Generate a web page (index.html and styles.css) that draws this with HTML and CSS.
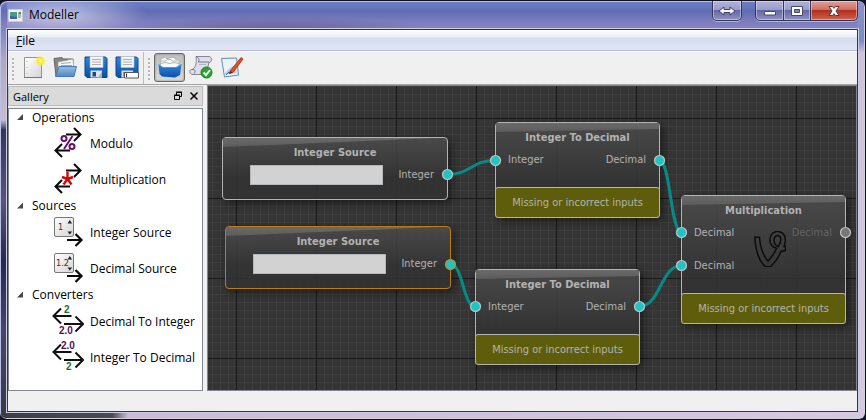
FILE: index.html
```html
<!DOCTYPE html>
<html lang="en">
<head>
<meta charset="utf-8">
<title>Modeller</title>
<link rel="stylesheet" href="styles.css">
</head>
<body>
<svg width="0" height="0" class="defs" aria-hidden="true">
  <defs>
    <linearGradient id="blue" x1="0" y1="0" x2="0" y2="1"><stop offset="0" stop-color="#2f86dc"/><stop offset="1" stop-color="#0a4fa8"/></linearGradient>
    <linearGradient id="folder" x1="0" y1="0" x2="0" y2="1"><stop offset="0" stop-color="#9dbde0"/><stop offset="1" stop-color="#5287c0"/></linearGradient>
    <linearGradient id="paper" x1="0" y1="0" x2="1" y2="1"><stop offset="0" stop-color="#ffffff"/><stop offset="1" stop-color="#d4d4d4"/></linearGradient>
    <radialGradient id="sun"><stop offset="0" stop-color="#fffde0"/><stop offset="0.35" stop-color="#fff21a"/><stop offset="0.65" stop-color="#f8ec30" stop-opacity="0.8"/><stop offset="1" stop-color="#f8f060" stop-opacity="0"/></radialGradient>
    <symbol id="disk" viewBox="0 0 24 24">
      <path d="M1 2h20.500l1.500 1.500V22.500H3L1 20.500z" fill="url(#blue)" stroke="#0b4690"/>
      <path d="M6 1.500h13v11H6z" fill="#f4f4f4" stroke="#b9c4cf" stroke-width=".6"/>
      <path d="M8 4.500h9M8 7h9M8 9.500h9" stroke="#b0b0b0"/>
      <path d="M6.500 15.500h11.500v7H6.500z" fill="#dfe3e6"/>
      <path d="M8.500 17h3.500v4.500H8.500z" fill="#164c8c"/>
      <path d="M14 22.500l4-6v6z" fill="#aab0b6"/>
    </symbol>
    <symbol id="swap" viewBox="0 0 32 32">
      <path d="M14 7.500h14M22 1l6.500 6.500L22 14M18 23.500H4M10 17l-6.500 6.500L10 30" fill="none" stroke="#0a0a0a" stroke-width="2"/>
    </symbol>
    <symbol id="swap-flat" viewBox="0 0 32 32">
      <path d="M19.500 11H1.500M9 3.500L1.500 11 9 18.500M12 19h18.500M23.500 11.500L31 19l-7.500 7.500" fill="none" stroke="#111" stroke-width="2"/>
    </symbol>
    <symbol id="spin" viewBox="0 0 32 32">
      <path d="M15 24h14M23.500 18l6 6-6 6" fill="none" stroke="#0a0a0a" stroke-width="2.200"/>
      <rect x="2.500" y="1.500" width="19" height="19" rx="1.500" fill="url(#paper)" stroke="#777"/>
      <path d="M15.500 7.500l2.300-3.500 2.300 3.500zM15.500 15.500l2.300 3 2.300-3z" fill="#222"/>
    </symbol>
  </defs>
</svg>
<div class="window">
  <header class="titlebar">
    <svg class="app-icon" viewBox="0 0 16 14"><path d="M.5.500h14v12H.5z" fill="#f0f0f0" stroke="#c8c8d0"/><path d="M2 3h7v7H2z" fill="#4a9a84"/><path d="M2 7l7 1v2H2z" fill="#4660a0"/><path d="M10 3h3v6h-3z" fill="#aab8ba"/><path d="M11 3h2v2h-2z" fill="#3c8c68"/></svg>
    <h1 class="title">Modeller</h1>
    <div class="captions">
      <button class="cap cap-span" aria-label="Span displays"><svg viewBox="0 0 18 10"><path d="M1 5l5-4v2.500h6V1l5 4-5 4V6.500H6V9z" fill="#f6f6f6" stroke="#40456b" stroke-width="1"/></svg></button>
      <div class="cap-group">
        <button class="cap cap-min" aria-label="Minimize"><svg viewBox="0 0 18 10"><path d="M3.500 5.500h11v3.500h-11z" fill="#fff" stroke="#454a66"/></svg></button>
        <button class="cap cap-max" aria-label="Maximize"><svg viewBox="0 0 18 10"><path d="M3.500.500h11v9h-11z" fill="#fff" stroke="#454a66"/><path d="M6.500 3.500h5v3h-5z" fill="#8587ad" stroke="#454a66"/></svg></button>
        <button class="cap cap-close" aria-label="Close"><svg viewBox="0 0 18 10"><path d="M4 .5h3.500L9 2.300 10.500.500H14L11 5l3 4.500h-3.500L9 7.700 7.500 9.500H4L7 5z" fill="#fff" stroke="#5b3338"/></svg></button>
      </div>
    </div>
  </header>
  <div class="client">
    <nav class="menubar"><button class="menu"><u>F</u>ile</button></nav>
    <div class="toolbar">
      <div class="tools">
        <button class="tool" aria-label="New"><svg viewBox="0 0 24 24"><path d="M2.500 2.500h17v20h-17z" fill="url(#paper)" stroke="#949494"/><path d="M2 22.500h18" stroke="#777"/><path d="M5 6v1M5 12v1M5 18v1" stroke="#aaa"/><circle cx="18.500" cy="6" r="5.500" fill="url(#sun)"/></svg></button>
        <button class="tool" aria-label="Open"><svg viewBox="0 0 24 24"><path d="M1 3.500l8-1 1 1.500h10v17H3z" fill="#858585" stroke="#666"/><path d="M5 7l15-3 1 10H5z" fill="#f5f5f5" stroke="#999" stroke-width=".7"/><path d="M8 8.500l10-1M8 10.500h11" stroke="#aaa"/><path d="M6 11.500h17.500L21 21.500H2.500z" fill="url(#folder)" stroke="#457bb6"/></svg></button>
        <button class="tool" aria-label="Save"><svg viewBox="0 0 24 24"><use href="#disk"/></svg></button>
        <button class="tool" aria-label="Save as"><svg viewBox="0 0 24 24"><use href="#disk"/><path d="M9.500 17.500h14v5.500h-14z" fill="#fff" stroke="#555"/><path d="M11.500 18.500v3.500" stroke="#333"/></svg></button>
      </div>
      <div class="tools">
        <button class="tool tool-on" aria-label="Gallery"><svg viewBox="0 0 24 24"><path d="M3 3.500l4-1 1 1h3l1-1h4l1 1.500 4 1v8H2z" fill="#fafafa" stroke="#aaa" stroke-width=".8"/><path d="M3 6h5l1-1.500h4L14 6h6M3 8.500l4-1 5 1 4-1 5 1" fill="none" stroke="#b5b5b5"/><path d="M.5 9.500l4.500 3h13l5.500-3-1.500 10.500L17 22.500 4 21.500 1.500 19z" fill="url(#blue)"/><path d="M.5 9.500l4.500 3h13l5.500-3" fill="none" stroke="#3d97e6"/></svg></button>
        <button class="tool" aria-label="Validate"><svg viewBox="0 0 24 24"><path d="M7 1.500h13c4 1 3 6 0 6-1.500 7-4 10-7 12H3c-3-1-3-5 0-5 3-1 5-5 4-13z" fill="#dfdfea" stroke="#85859a"/><path d="M7 1.500c3 1 4 4 2 5.500h11M3 14.500c3-.5 4 2 2 4" fill="none" stroke="#74748c"/><path d="M10 9.500h7" stroke="#b2b2c4"/><circle cx="17.500" cy="17.500" r="5.500" fill="#27a52e" stroke="#13801c"/><path d="M14.500 17.500l2.500 2.500 4-5" fill="none" stroke="#fff" stroke-width="2"/></svg></button>
        <button class="tool" aria-label="Edit"><svg viewBox="0 0 24 24"><path d="M1.500 3.500l15-.5 2 17-14 2z" fill="#eaf3fc" stroke="#648bb3"/><path d="M4 19c3-2 5-7 10-8l3 7z" fill="#b2cfe9"/><path d="M6 20l3-3" stroke="#315885"/><path d="M10.500 15.500L21 2.500l2 1.500-10 13.500-3.500 1z" fill="#e64a22" stroke="#a92c18" stroke-width=".8"/><path d="M9 19l1-3 2.500 1.500z" fill="#334"/></svg></button>
      </div>
    </div>
    <main class="workspace">
      <aside class="dock">
        <div class="dock-title"><h2>Gallery</h2>
          <button class="dock-btn" aria-label="Float"><svg viewBox="0 0 10 10"><path d="M3.500 4V1.500h5v4H7M3 1h6M1.500 4.500h5v4h-5zM1 4h6" fill="none" stroke="#000"/></svg></button>
          <button class="dock-btn" aria-label="Close gallery"><svg viewBox="0 0 10 10"><path d="M1.500 1.500l7 7M8.500 1.500l-7 7" stroke="#000" stroke-width="1.500"/></svg></button>
        </div>
        <ul class="tree">
          <li><div class="group">Operations</div>
            <ul>
              <li class="item"><svg viewBox="0 0 32 32"><use href="#swap"/><g fill="none" stroke="#6a0f6a" stroke-width="2"><circle cx="12" cy="11.500" r="2.500"/><circle cx="20" cy="19.500" r="2.500"/><path d="M20.500 9L12 22"/></g></svg>Modulo</li>
              <li class="item"><svg viewBox="0 0 32 32"><use href="#swap"/><path d="M15.500 9v7L10 14M15.500 16l5.500-2M15.500 16l-4 5.500M15.500 16l4 5.500" fill="none" stroke="#c80a0a" stroke-width="2.400"/></svg>Multiplication</li>
            </ul></li>
          <li><div class="group">Sources</div>
            <ul>
              <li class="item"><svg viewBox="0 0 32 32"><use href="#spin"/><text x="6" y="14" class="glyph-spin">1</text></svg>Integer Source</li>
              <li class="item"><svg viewBox="0 0 32 32"><use href="#spin"/><text x="4" y="14" class="glyph-spin">1.2</text></svg>Decimal Source</li>
            </ul></li>
          <li><div class="group">Converters</div>
            <ul>
              <li class="item"><svg viewBox="0 0 32 32"><use href="#swap-flat"/><text x="12" y="8" class="glyph-num green">2</text><text x="7" y="29" class="glyph-num purple">2.0</text></svg>Decimal To Integer</li>
              <li class="item"><svg viewBox="0 0 32 32"><use href="#swap-flat"/><text x="9" y="8" class="glyph-num purple">2.0</text><text x="14" y="29" class="glyph-num green">2</text></svg>Integer To Decimal</li>
            </ul></li>
        </ul>
      </aside>
      <section class="canvas" aria-label="Model">
        <article class="node node-source at-source-a">
          <h3>Integer Source</h3>
          <div class="row"><input class="value" type="text" aria-label="Integer value"><span class="port out">Integer</span></div>
        </article>
        <article class="node node-source selected at-source-b">
          <h3>Integer Source</h3>
          <div class="row"><input class="value" type="text" aria-label="Integer value"><span class="port out">Integer</span></div>
        </article>
        <article class="node at-convert-a">
          <h3>Integer To Decimal</h3>
          <div class="row"><span class="port in">Integer</span><span class="port out">Decimal</span></div>
          <p class="warning">Missing or incorrect inputs</p>
        </article>
        <article class="node at-convert-b">
          <h3>Integer To Decimal</h3>
          <div class="row"><span class="port in">Integer</span><span class="port out">Decimal</span></div>
          <p class="warning">Missing or incorrect inputs</p>
        </article>
        <article class="node node-tall at-multiply">
          <h3>Multiplication</h3>
          <div class="row"><span class="port in">Decimal</span><span class="port out off">Decimal</span></div>
          <div class="row"><span class="port in">Decimal</span></div>
          <svg class="emblem" viewBox="0 0 32 36"><path d="M.8 6.300H5.500c.5 10 4 18.500 8.500 24 4-5 7.500-10 8.500-13-5-1.500-7-5-6.500-9.500.5-5 4-7.500 8-7.300 5 .3 8 4.500 7.200 10-.3 2-.7 3.500-1 5l1.300 0v4c-1.500.5-3 .8-4.500.8-2 5.500-5.500 10.500-9.500 14.500-2 1.500-5 1.500-7 0C5 29.500 1.500 18 .8 6.300zM24 4.500c-2.500 0-4 2-4 5s1.500 5 4.500 6c1.500-3 2.500-5.500 2.300-7.500-.2-2.300-1.300-3.500-2.800-3.500z" fill="none" stroke="#0c0c0c" stroke-width="1.500"/></svg>
          <p class="warning">Missing or incorrect inputs</p>
        </article>
        <svg class="wires" width="649" height="305" aria-hidden="true">
          <g fill="none" stroke="#068a86" stroke-width="3">
            <path d="M239 88.500C263 88.500 263 74.500 287 74.500"/>
            <path d="M243 178.500C255 178.500 255 220.500 267 220.500"/>
            <path d="M451.500 74.500C462.500 74.500 462.500 146.500 473.500 146.500"/>
            <path d="M431.500 220.500C452.500 220.500 452.500 179.500 473.500 179.500"/>
          </g>
          <g fill="#20c4c4" stroke="#c4c4c4" stroke-width="1.200">
            <circle cx="239.500" cy="88.500" r="5"/><circle cx="287.500" cy="74.500" r="5"/><circle cx="451.500" cy="74.500" r="5"/>
            <circle cx="267.500" cy="220.500" r="5"/><circle cx="431.500" cy="220.500" r="5"/>
            <circle cx="473.500" cy="146.500" r="5"/><circle cx="473.500" cy="179.500" r="5"/>
            <circle cx="242.500" cy="178.500" r="5" stroke="#c98a22"/><circle cx="637.500" cy="146.500" r="5" fill="#777"/>
          </g>
        </svg>
      </section>
    </main>
    <footer class="statusbar"></footer>
  </div>
</div>
</body>
</html>
```
FILE: styles.css
```css
* { box-sizing: border-box; }
body { margin: 0; background: #14142a; font: 12px/17px "Open Sans", "Noto Sans", sans-serif; color: #000; }
button { font: inherit; color: inherit; background: none; border: 0; padding: 0; margin: 0; }
h1, h2, h3, p, ul { margin: 0; padding: 0; font: inherit; list-style: none; }
.defs { position: absolute; }

.window {
  min-height: 100vh;
  display: flex;
  flex-direction: column;
  padding: 0 7px 7px;
  border-radius: 7px;
  border: 1px solid #11111d;
  border-width: 1px 1px 1px 0;
  box-shadow: inset 1px 1px 0 #b9c0e6, inset -1px -1px 0 #cfd0e0;
  background:
    linear-gradient(90deg, #3c3e3d 0, #4b4a4c 112px, #cdbad6 128px, #d8c8e0 100%) 0 100% / 100% 8px no-repeat,
    linear-gradient(#7c86c4 0, #b5a6bd 30px, #c9bccb 90px, #343657 100px, #60527a 170px, #272a48 230px, #4b4466 300px, #30343a 100%) 0 29px / 8px 100% no-repeat,
    linear-gradient(#8c92c6 0, #7b8ac6 40px, #d2c2d8 52px, #d8c8e0 100%) 100% 0 / 8px 100% no-repeat,
    linear-gradient(#7080cc 0, #5f6db2 10px, #7b7bbd 20px, #8986c0 29px);
}
.titlebar {
  display: flex;
  align-items: flex-start;
  height: 28px;
  background:
    radial-gradient(ellipse 90px 22px at 50px 14px, rgba(225, 225, 245, 0.75), rgba(225, 225, 245, 0)),
    radial-gradient(ellipse 150px 12px at 270px 28px, rgba(72, 62, 96, 0.45), rgba(72, 62, 96, 0));
}
.app-icon { width: 16px; height: 14px; margin: 8px 5px 0 1px; }
.title { flex: 1; padding-top: 5px; }
.captions { display: flex; gap: 13px; }
.cap-group { display: flex; border-radius: 0 0 5px 5px; }
.cap {
  display: grid;
  place-items: center;
  height: 20px;
  border: 1px solid #33365a;
  border-top: 0;
  background: linear-gradient(#b0b3da, #9a9dcb 45%, #6165a0 46%, #8f92c4);
  box-shadow: inset 0 0 0 1px rgba(255, 255, 255, 0.4), 0 1px 0 #b5b6dc;
}
.cap svg { width: 18px; height: 10px; }
.cap-span { width: 30px; border-radius: 0 0 5px 5px; }
.cap-min { width: 29px; border-radius: 0 0 0 5px; }
.cap-max { width: 27px; border-left: 0; }
.cap-close { width: 47px; border-left: 0; border-radius: 0 0 5px 0; background: linear-gradient(#e0a096, #cf6f62 45%, #b02c1c 46%, #cf6248); }

.client {
  flex: 1;
  display: flex;
  flex-direction: column;
  border: 1px solid #35364c;
  box-shadow: 0 0 0 1px #cbcde6;
  background: #f0f0f0;
}
.menubar {
  display: flex;
  height: 22px;
  border-bottom: 1px solid #fff;
  box-shadow: inset 0 -1px 0 #b4bad2;
  background: linear-gradient(#fff 0, #e8ecf5 7px, #d5dcee 8px, #e1e6f5 20px);
}
.menu { padding: 0 8px; }
.toolbar { display: flex; height: 33px; border-bottom: 1px solid #a5a5a5; }
.tools { display: flex; align-items: center; padding: 0 1px 2px 10px; border-right: 1px solid #bdbdbd; background: repeating-linear-gradient(transparent 0 2px, #b8b8b8 2px 4px) 4px 4px / 2px 26px no-repeat; }
.tools:last-child { border: 0; }
.tool { display: grid; place-items: center; width: 31px; height: 29px; border: 1px solid transparent; border-radius: 3px; }
.tool svg { width: 24px; height: 24px; }
.tool-on { border-color: #686868; background: linear-gradient(#bdbdbd, #d9d9d9); box-shadow: inset 0 0 2px #777; }

.workspace { flex: 1; display: flex; gap: 4px; }
.dock { width: 195px; display: flex; flex-direction: column; gap: 2px; padding-top: 1px; }
.dock-title { display: flex; align-items: center; gap: 6px; height: 20px; padding: 0 3px 0 4px; border: 1px solid #bcbcbc; background: #dadada; }
.dock-title h2 { flex: 1; padding-top: 1px; font-size: 11px; }
.dock-btn { width: 10px; height: 10px; }
.dock-btn svg { display: block; }
.tree { flex: 1; border: 1px solid #828790; background: #fff; }
.tree > li:first-child .group { height: 16px; }
.group { display: flex; align-items: center; height: 17px; padding-left: 8px; gap: 9px; }
.group::before { content: ""; width: 6px; height: 6px; background: #484848; clip-path: polygon(100% 0, 100% 100%, 0 100%); }
.item { display: flex; align-items: center; gap: 6px; height: 36px; padding-left: 43px; }
.item svg { width: 32px; height: 32px; }
.glyph-spin { font: 9px "DejaVu Sans Condensed", sans-serif; fill: #333; }
.glyph-num { font: bold 10px "Liberation Sans", sans-serif; }
.green { fill: #16703a; }
.purple { fill: #551050; }

.canvas {
  flex: 1;
  position: relative;
  overflow: hidden;
  border: 1px solid #83858c;
  background-color: #353535;
  background-image:
    linear-gradient(90deg, #191919 1px, transparent 1px),
    linear-gradient(#191919 1px, transparent 1px),
    linear-gradient(90deg, #3e3e3e 1px, transparent 1px),
    linear-gradient(#3e3e3e 1px, transparent 1px);
  background-size: 80px 80px, 80px 80px, 8px 8px, 8px 8px;
  background-position: 28px 32px, 28px 32px, 4px 0, 4px 0;
}
.node {
  position: absolute;
  display: flex;
  flex-direction: column;
  width: 165px;
  height: 96px;
  border: 1px solid #b4b4b4;
  border-radius: 4px;
  background: linear-gradient(rgba(76, 76, 76, 0.88), rgba(50, 50, 50, 0.88) 65%);
  box-shadow: 3px 3px 10px rgba(0, 0, 0, 0.5);
  color: #b2b2b2;
  font: 11px/14px "DejaVu Sans Condensed", sans-serif;
}
.node::before {
  content: "";
  position: absolute;
  inset: 0 0 auto;
  height: 9px;
  background: linear-gradient(#6a6a6a, #5c5c5c);
  clip-path: polygon(0 0, 100% 0, 100% 6px, 0 9px);
}
.node-source { width: 226px; height: 63px; }
.node-source::before { clip-path: polygon(0 0, 95% 0, 0 9px); }
.node-tall { height: 129px; }
.selected { border-color: #bd7c12; }
.node h3 { position: relative; padding-top: 8px; height: 27px; text-align: center; font-weight: bold; }
.row { display: flex; align-items: center; height: 20px; margin-bottom: 13px; padding: 0 13px 0 12px; }
.node-source .row { padding-left: 27px; }
.port.out { margin-left: auto; }
.off { color: #626262; }
.value { width: 133px; height: 20px; border: 1px solid #b2b8bc; background: #d2d2d2; padding: 0 4px; }
.warning {
  margin: auto -1px -1px;
  height: 31px;
  padding-top: 8px;
  border: 1px solid #b4b4b4;
  border-radius: 3px;
  background: #5e5d0c;
  text-align: center;
}
.emblem { position: absolute; left: 72px; top: 35px; width: 32px; height: 36px; }
.at-source-a { left: 14px; top: 51px; }
.at-source-b { left: 17px; top: 140px; }
.at-convert-a { left: 287px; top: 36px; }
.at-convert-b { left: 267px; top: 183px; }
.at-multiply { left: 473px; top: 109px; }
.wires { position: absolute; left: 0; top: 0; }
.statusbar { height: 20px; }
```
